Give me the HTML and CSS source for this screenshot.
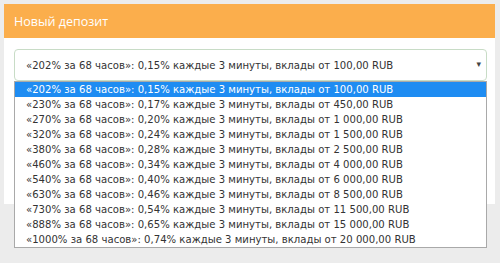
FILE: index.html
```html
<!DOCTYPE html>
<html lang="ru">
<head>
<meta charset="utf-8">
<title>Новый депозит</title>
<link rel="stylesheet" href="styles.css">
</head>
<body>
<div class="panel">
  <div class="panel-head">Новый депозит</div>
  <div class="panel-body">
    <div class="select">
      <span class="select-value">«202% за 68 часов»: 0,15% каждые 3 минуты, вклады от 100,00 RUB</span>
      <span class="select-arrow">▾</span>
    </div>
  </div>
</div>
<ul class="options">
  <li class="option selected">«202% за 68 часов»: 0,15% каждые 3 минуты, вклады от 100,00 RUB</li>
  <li class="option">«230% за 68 часов»: 0,17% каждые 3 минуты, вклады от 450,00 RUB</li>
  <li class="option">«270% за 68 часов»: 0,20% каждые 3 минуты, вклады от 1 000,00 RUB</li>
  <li class="option">«320% за 68 часов»: 0,24% каждые 3 минуты, вклады от 1 500,00 RUB</li>
  <li class="option">«380% за 68 часов»: 0,28% каждые 3 минуты, вклады от 2 500,00 RUB</li>
  <li class="option">«460% за 68 часов»: 0,34% каждые 3 минуты, вклады от 4 000,00 RUB</li>
  <li class="option">«540% за 68 часов»: 0,40% каждые 3 минуты, вклады от 6 000,00 RUB</li>
  <li class="option">«630% за 68 часов»: 0,46% каждые 3 минуты, вклады от 8 500,00 RUB</li>
  <li class="option">«730% за 68 часов»: 0,54% каждые 3 минуты, вклады от 11 500,00 RUB</li>
  <li class="option">«888% за 68 часов»: 0,65% каждые 3 минуты, вклады от 15 000,00 RUB</li>
  <li class="option">«1000% за 68 часов»: 0,74% каждые 3 минуты, вклады от 20 000,00 RUB</li>
</ul>
</body>
</html>
```
FILE: styles.css
```css
html, body {
  margin: 0;
  padding: 0;
}
body {
  background: #ececec;
  width: 500px;
  height: 263px;
  overflow: hidden;
  position: relative;
  font-family: "DejaVu Sans", sans-serif;
}
.panel {
  margin: 4px 5px 0 4px;
  background: #ffffff;
}
.panel-head {
  height: 34px;
  box-sizing: border-box;
  padding: 9px 10px 0 10px;
  background: #fbae4c;
  color: #ffffff;
  font-family: "Open Sans", sans-serif;
  font-size: 12.5px;
  line-height: 17px;
}
.panel-body {
  height: 166px;
  box-sizing: border-box;
  padding: 11px 8px 0 10px;
}
.select {
  height: 32px;
  box-sizing: border-box;
  border: 1px solid #c8dcc6;
  border-radius: 4px;
  display: flex;
  align-items: center;
  justify-content: space-between;
  padding: 0 5px 0 11px;
  color: #333333;
  font-size: 10.1px;
}
.select-arrow {
  font-size: 9px;
  color: #444444;
  margin-top: -3px;
}
.options {
  position: absolute;
  left: 14px;
  top: 81px;
  width: 473px;
  margin: 0;
  padding: 0;
  list-style: none;
  box-sizing: border-box;
  border: 1px solid #a9a9a9;
  background: #ffffff;
}
.option {
  height: 15px;
  line-height: 15px;
  padding-left: 11px;
  font-size: 10.1px;
  color: #333333;
  white-space: nowrap;
}
.option.selected {
  background: #1e8cf2;
  color: #ffffff;
}
```
